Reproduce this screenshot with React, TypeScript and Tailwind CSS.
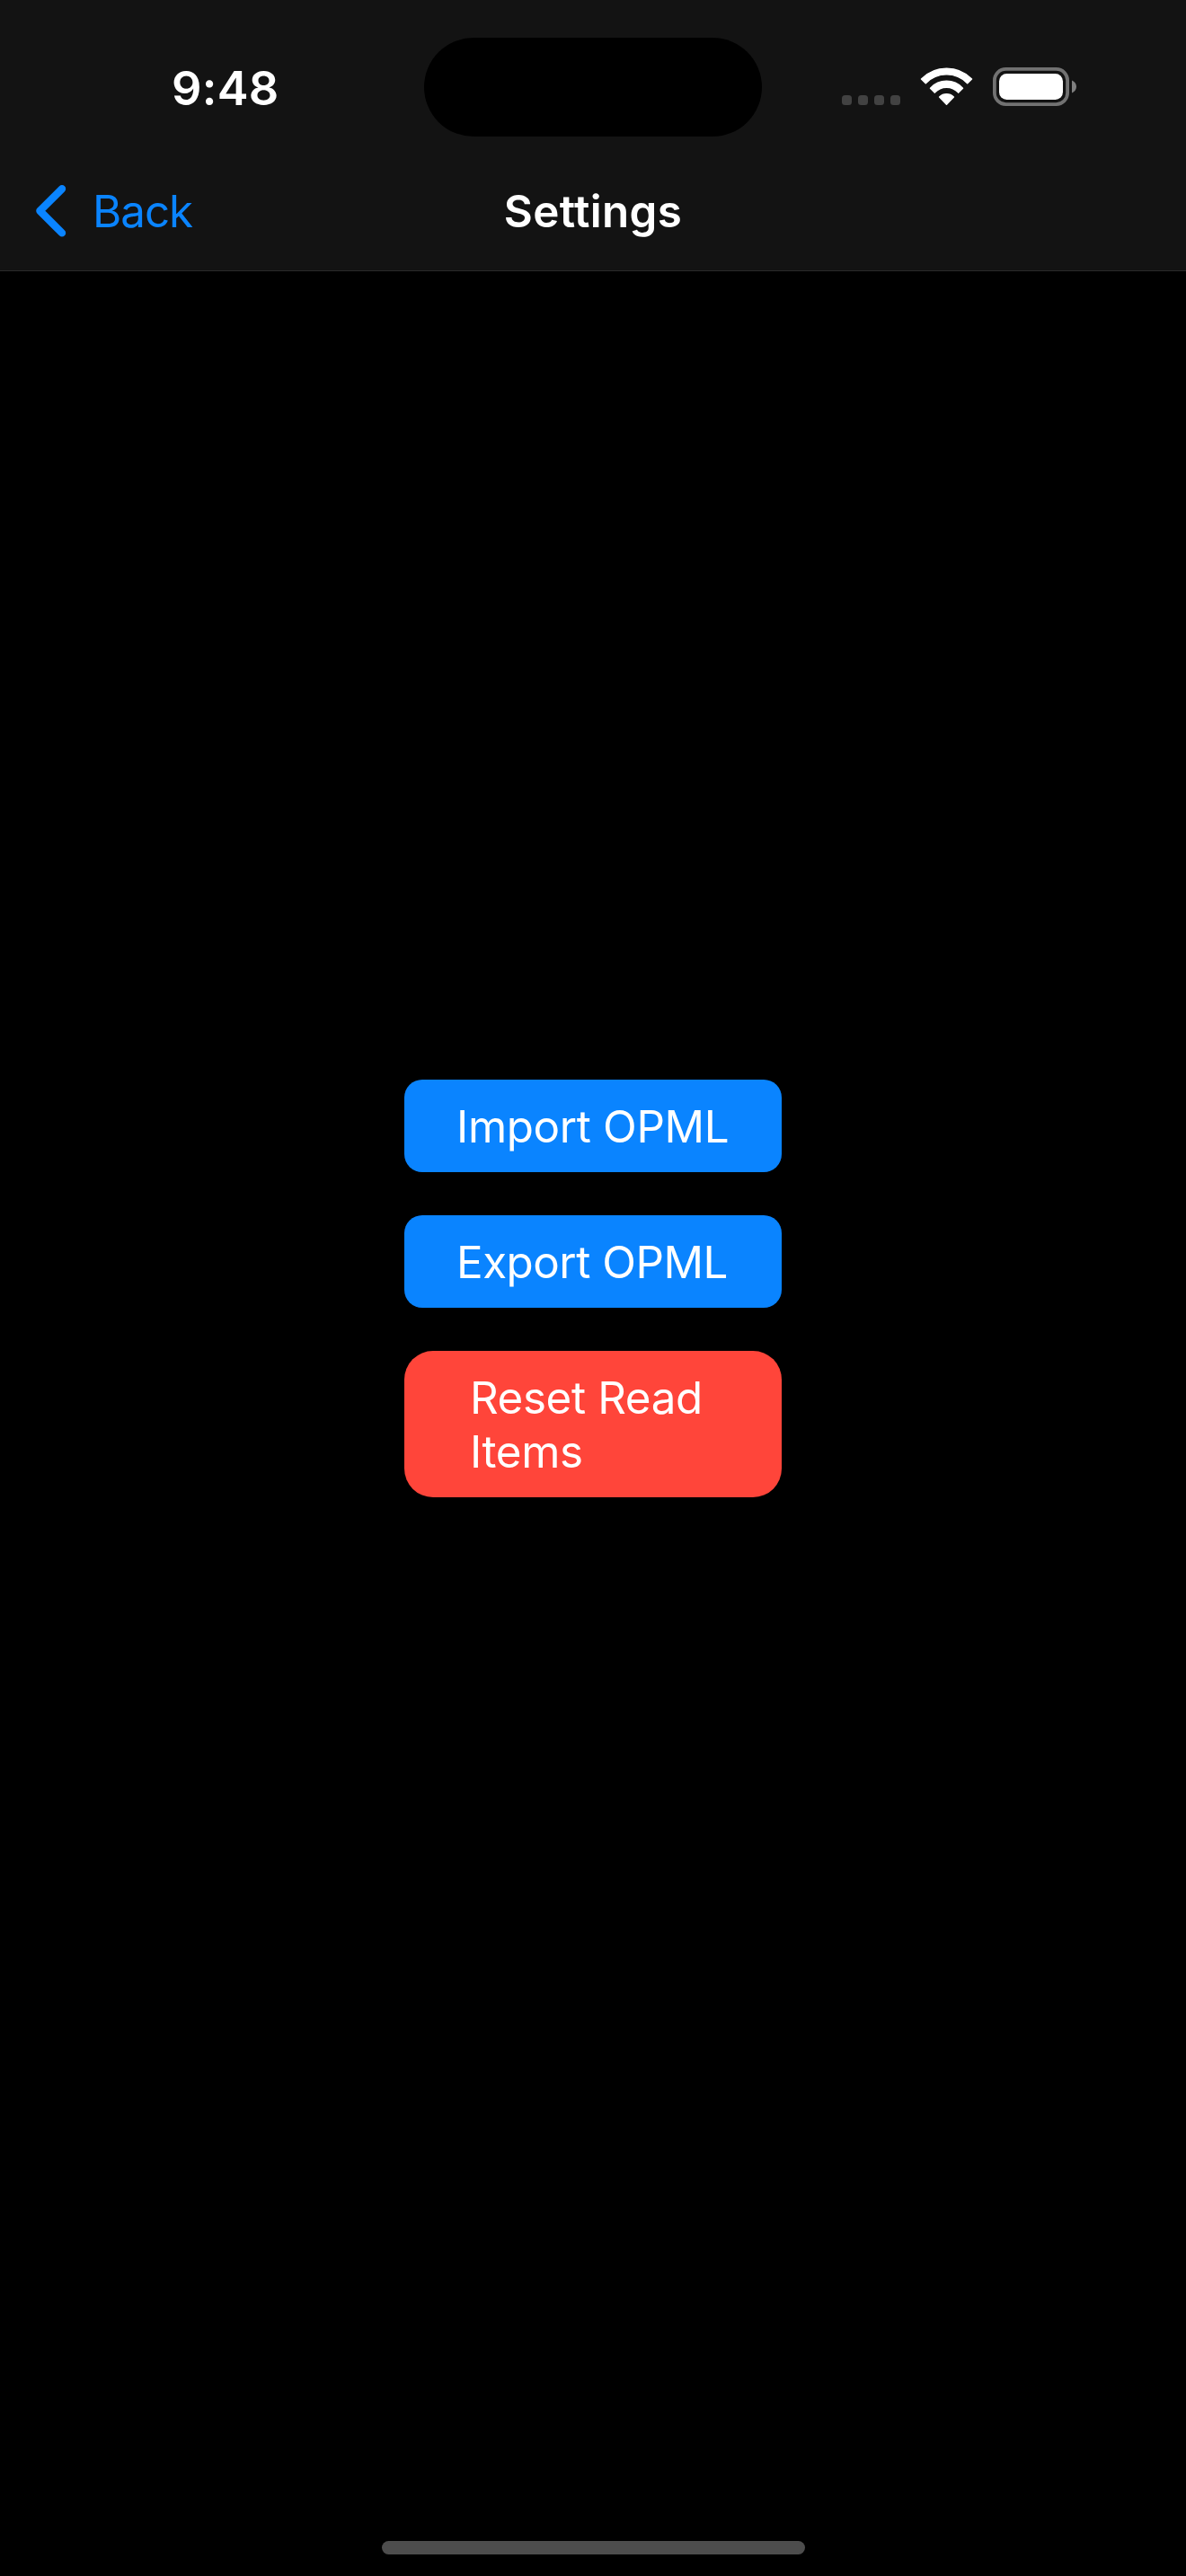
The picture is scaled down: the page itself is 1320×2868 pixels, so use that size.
function SignalDots() {
  return (
    <div className="mb-px flex gap-[7px]">
      {[0, 1, 2, 3].map((i) => (
        <span key={i} className="size-[11px] rounded-[3.5px] bg-[#424242]" />
      ))}
    </div>
  );
}

function WifiIcon() {
  return (
    <svg
      className="ml-[22px] h-[44px] w-[59px]"
      viewBox="0 0 59 44"
      fill="#fff"
      stroke="#fff"
      strokeWidth="1.5"
      strokeLinejoin="round"
    >
      <path d="M1.5 13.9A39.2 39.2 0 0 1 57.5 13.9L52.7 18.7A32.2 32.2 0 0 0 6.3 18.7Z" />
      <path d="M11.5 24.2A24.6 24.6 0 0 1 47.5 24.2L42.7 29.1A17.8 17.8 0 0 0 16.3 29.1Z" />
      <path d="M21.6 34.1A11.2 11.2 0 0 1 37.4 34.1L29.5 42.2Z" />
    </svg>
  );
}

function BatteryIcon() {
  return (
    <svg className="ml-[22px] h-[43px] w-[94px]" viewBox="0 0 94 43" fill="none">
      <rect x="1.9" y="1.9" width="81.2" height="39.2" rx="12.5" stroke="#727272" strokeWidth="3.8" />
      <rect x="7" y="7" width="71" height="29" rx="8.5" fill="#fff" />
      <path d="M88 14.5C91 15.7 93 18.3 93 21.5S91 27.3 88 28.5Z" fill="#808080" />
    </svg>
  );
}

function StatusBar() {
  return (
    <div className="grid h-[169px] grid-cols-[472px_376px_472px] items-start pt-[42px]">
      <time className="mt-6 pl-[191px] text-[52.3px] leading-[64px] font-semibold tracking-[0.3px] text-white">
        9:48
      </time>
      <div className="h-[110px] rounded-full bg-black" />
      <div className="mt-8 flex items-end pl-[89px]">
        <SignalDots />
        <WifiIcon />
        <BatteryIcon />
      </div>
    </div>
  );
}

function NavBar() {
  return (
    <nav className="grid h-[132px] grid-cols-[1fr_auto_1fr] items-center text-[49.3px] leading-[60px]">
      <button className="flex items-center pl-10 text-[#0a84ff]">
        <svg className="h-[58px] w-[34px]" viewBox="0 0 34 58" fill="none">
          <path
            d="M29 4.3L4.4 28.8L29 53.4"
            stroke="currentColor"
            strokeWidth="8.4"
            strokeLinecap="round"
            strokeLinejoin="round"
          />
        </svg>
        <span className="ml-[29px] tracking-[-1px]">Back</span>
      </button>
      <h1 className="font-semibold tracking-[0.37px] text-white">Settings</h1>
    </nav>
  );
}

export default function App() {
  return (
    <div className="flex h-[2868px] w-[1320px] flex-col bg-black font-['Inter',sans-serif]">
      <header className="border-b border-[#2a2a2a] bg-[#131313]">
        <StatusBar />
        <NavBar />
      </header>
      <main className="flex flex-1 flex-col items-center gap-12 pt-[900px] text-[49.3px] leading-[60px] text-white">
        <button className="w-[420px] rounded-[20px] bg-[#0a84ff] pt-[22px] pb-[21px] pl-[58px] text-left tracking-[-0.35px] whitespace-nowrap">
          Import OPML
        </button>
        <button className="w-[420px] rounded-[20px] bg-[#0a84ff] pt-[22px] pb-[21px] pl-[58px] text-left tracking-[-0.48px] whitespace-nowrap">
          Export OPML
        </button>
        <button className="w-[420px] rounded-[32px] bg-[#ff453a] pt-[22px] pr-16 pb-[21px] pl-[73px] text-left tracking-[-0.38px]">
          Reset Read Items
        </button>
      </main>
      <div className="mb-6 ml-[425px] h-[15px] w-[471px] rounded-full bg-[#4d4d4d]" />
    </div>
  );
}
